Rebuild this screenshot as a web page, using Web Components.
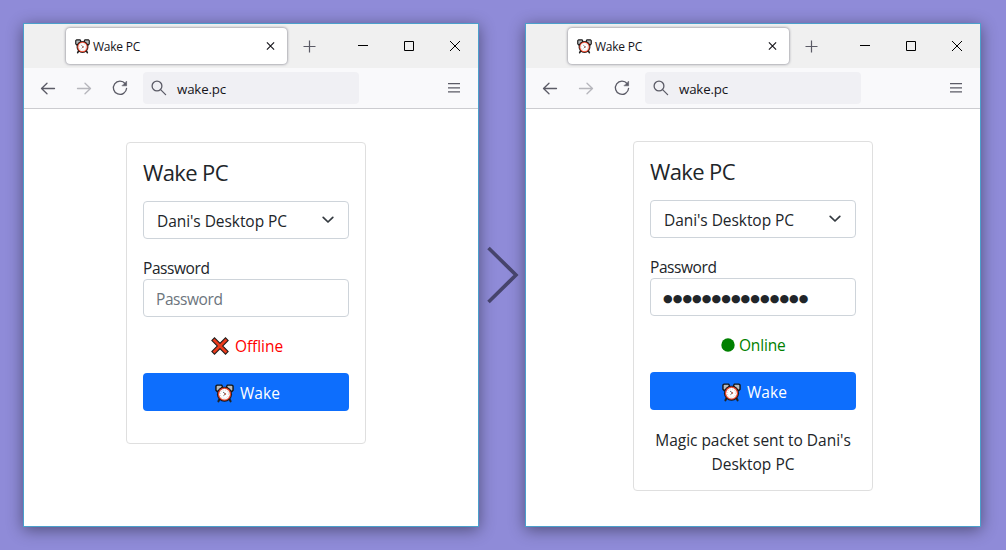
<!DOCTYPE html>
<html lang="en">
<head>
<meta charset="utf-8">
<title>Wake PC</title>
<style>
html,body{margin:0;height:100%}
body{background:#8f8bd8;font-family:"Open Sans","Noto Sans",sans-serif;color:#212529;overflow:hidden}
</style>
</head>
<body>
<wake-showcase></wake-showcase>
<script>
class Base extends HTMLElement{
  render(html){
    if(this.shadowRoot) return;
    this.attachShadow({mode:'open'}).innerHTML=html;
  }
}

/* Text spread evenly over a given advance width */
class FitText extends Base{
  connectedCallback(){
    this.render(`<style>:host{display:inline-block;white-space:pre;flex:none}span{display:inline-block}</style><span><slot></slot></span>`);
    const s=this.shadowRoot.querySelector('span'), w=+this.getAttribute('width');
    const n=this.textContent.length;
    const nat=s.getBoundingClientRect().width;
    if(w&&nat) s.style.letterSpacing=((w-nat)/n)+'px';
  }
}

class AlarmIcon extends Base{
  connectedCallback(){
    this.render(`<style>:host{display:block;flex:none;width:19px;height:19px}svg{display:block;width:100%;height:100%}</style>
<svg viewBox="0 0 20 20">
<path d="M5 15.5 3.6 18.2M15 15.5l1.4 2.7" stroke="#222" stroke-width="2.2" stroke-linecap="round"/>
<path d="M1 2.2 2 1.2h5l1 2-5.5 5L1 6.500zM19 2.200 18 1.200h-5l-1 2 5.500 5L19 6.500z" fill="#b9bcbf" stroke="#161616" stroke-width="1.500" stroke-linejoin="round"/>
<circle cx="10" cy="10.700" r="7.900" fill="#161616"/>
<circle cx="10" cy="10.700" r="6.900" fill="#e8442a"/>
<circle cx="10" cy="10.700" r="5.600" fill="#fff"/>
<circle cx="10" cy="10.700" r="4.400" fill="none" stroke="#aaa" stroke-width=".9" stroke-dasharray=".7 1.600"/>
<path d="M8.500 8.500 11 10.500 8.900 12.300" fill="none" stroke="#444" stroke-width=".9"/>
<circle cx="11" cy="10.500" r=".8" fill="#d8432c"/>
</svg>`);
  }
}

class TabStrip extends Base{
  connectedCallback(){
    this.render(`<style>
:host{display:flex;align-items:center;height:44px;background:#f0f0f0;padding-left:42px;box-sizing:border-box;color:#15141a}
.tab{display:flex;align-items:center;box-sizing:border-box;width:221px;height:36px;padding:0 12px 0 9px;border-radius:4px;background:#fff;box-shadow:0 0 3px rgba(40,40,60,.65);font-size:12px}
alarm-icon{width:15px;height:15px;margin-right:3px}
svg{display:block;flex:none}
.x{margin-left:auto}.plus{margin-left:16px}.ctl{margin-left:auto}
</style>
<div class="tab"><alarm-icon></alarm-icon><fit-text width="47">Wake PC</fit-text>
<svg class="x" width="9" height="10" viewBox="0 0 9 10"><path d="M.9 1.400l7.200 7.200M8.100 1.400.9 8.600" stroke="#15141a" stroke-width="1.150"/></svg></div>
<svg class="plus" width="13" height="13" viewBox="0 0 13 13"><path d="M6.500.5v12M.5 6.500h12" stroke="#5b5b66" stroke-width="1.200"/></svg>
<svg class="ctl" width="138" height="44" viewBox="0 0 138 44" fill="none" stroke="#000"><path d="M18 21.500h10"/><path d="M64.500 17.500h9v9h-9z"/><path d="M110 17l10 10M120 17l-10 10"/></svg>`);
  }
}

class AddressBar extends Base{
  connectedCallback(){
    this.render(`<style>
:host{display:flex;align-items:center;height:41px;box-sizing:border-box;background:#f9f9fb;border-bottom:1px solid #ccccd0;padding:0 18px 0 16px}
.nav{display:flex;gap:20px}
svg{display:block;flex:none;fill:none;stroke:#5b5b66;stroke-width:1.300;stroke-linecap:round;stroke-linejoin:round}
.dim{opacity:.42}
.field{display:flex;align-items:center;width:216px;height:32px;box-sizing:border-box;padding-left:8px;margin-left:15px;border-radius:4px;background:#f0f0f4;color:#15141a;font-size:13.300px}
.field fit-text{padding-top:2px}
.field svg{margin-right:10px}
.menu{margin-left:auto;stroke-linecap:butt}
</style>
<div class="nav">
<svg width="16" height="16" viewBox="0 0 16 16"><path d="M1.500 8.500h13M7 3.200 1.500 8.500 7 13.800"/></svg>
<svg class="dim" width="16" height="16" viewBox="0 0 16 16"><path d="M14.500 8.500h-13M9 3.200l5.500 5.300L9 13.800"/></svg>
<svg width="16" height="16" viewBox="0 0 16 16"><path d="M13.200 3.700A6.600 6.600 0 1 0 14.600 8.300"/><path d="M14.600 1.500v4.300h-4.300z" fill="#5b5b66" stroke-width=".6"/></svg>
</div>
<div class="field"><svg width="16" height="16" viewBox="0 0 16 16"><circle cx="6" cy="6" r="4.900"/><path d="M9.600 9.600l5 5"/></svg><fit-text width="49">wake.pc</fit-text></div>
<svg class="menu" width="12" height="12" viewBox="0 0 12 12"><path d="M0 1.700h12M0 5.800h12M0 9.900h12"/></svg>`);
  }
}

class BrowserWindow extends Base{
  connectedCallback(){
    this.render(`<style>
:host{display:flex;flex-direction:column;box-sizing:border-box;width:456px;height:504px;flex:none;background:#fff;border:1px solid #4b9fcb;box-shadow:0 3px 15px rgba(0,0,0,.43)}
main{flex:1;display:block}
</style><tab-strip></tab-strip><address-bar></address-bar><main><slot></slot></main>`);
  }
}

class WakeCard extends Base{
  connectedCallback(){
    const on=this.getAttribute('state')==='online';
    this.render(`<style>
:host{display:flex;flex-direction:column;box-sizing:border-box;width:240px;border:1px solid #dfdfdf;border-radius:4px;padding:16px;font-size:15.500px;line-height:24px}
:host([state=offline]){height:302px;margin:33px 0 0 102px}
:host([state=online]){height:350px;margin:32px 0 0 107px}
.title{font-size:22px;line-height:26px;height:42px;flex:none}
.box{display:flex;align-items:center;box-sizing:border-box;height:38px;flex:none;border:1px solid #ced4da;border-radius:4px;padding:2px 14px 0 12px}
.select{padding:0 14px 0 13px}
.select fit-text{padding-top:2px}
.select svg{margin-left:auto;margin-bottom:1px}
.label{margin-top:17px;height:23px;flex:none}
.ph{color:#6c757d}
.dots{font:11px/24px "DejaVu Sans",sans-serif;padding-top:2px}
.status{display:flex;align-items:center;height:24px;margin-top:17px;flex:none;color:red;padding-left:68px}
:host([state=online]) .status{color:green;padding-left:71px}
.status svg{flex:none}
.btn{display:flex;align-items:center;height:38px;flex:none;margin-top:15px;border-radius:4px;background:#0d6efd;color:#fff;padding-left:72px}
.btn alarm-icon{margin-right:6px;position:relative;top:1px}
.btn fit-text{padding-top:2px}
.msg{margin-top:18px;text-align:center}
.msg fit-text{display:block}
</style>
<div class="title"><fit-text width="85">Wake PC</fit-text></div>
<div class="box select"><fit-text width="130">Dani's Desktop PC</fit-text>
<svg width="12" height="8" viewBox="0 0 12 8"><path d="M1.200 1.300 6 6l4.800-4.700" fill="none" stroke="#343a40" stroke-width="1.700" stroke-linecap="round" stroke-linejoin="round"/></svg></div>
<div class="label"><fit-text width="66.500">Password</fit-text></div>
<div class="box">${on?'<fit-text class="dots" width="145.500">●●●●●●●●●●●●●●●</fit-text>':'<fit-text class="ph" width="66.500">Password</fit-text>'}</div>
<div class="status">${on
?'<svg width="14" height="14" viewBox="0 0 14 14" style="margin-right:4px"><circle cx="7" cy="7" r="6.700" fill="green"/></svg><fit-text width="46.500">Online</fit-text>'
:'<svg width="18" height="18" viewBox="0 0 18 18" style="margin-right:6px"><path d="M3.500 3.500l11 11M14.500 3.500l-11 11" stroke="#1a1a1a" stroke-width="4.800" stroke-linecap="square"/><path d="M3.500 3.500l11 11M14.500 3.500l-11 11" stroke="#ea3b1c" stroke-width="2.800" stroke-linecap="square"/></svg><fit-text width="48">Offline</fit-text>'}</div>
<div class="btn"><alarm-icon></alarm-icon><fit-text width="40">Wake</fit-text></div>
${on?'<div class="msg"><fit-text width="195.500">Magic packet sent to Dani\'s</fit-text><fit-text width="83">Desktop PC</fit-text></div>':''}`);
  }
}

class WakeShowcase extends Base{
  connectedCallback(){
    this.render(`<style>
:host{display:flex;align-items:flex-start;box-sizing:border-box;width:1006px;height:550px;padding:23px 0 0 23px}
.arrow{width:46px;height:504px;display:flex;align-items:center;justify-content:center;flex:none;position:relative;z-index:1}
</style>
<browser-window><wake-card state="offline"></wake-card></browser-window>
<div class="arrow"><svg width="34" height="60" viewBox="0 0 34 60"><path d="M3.500 3 31 30 3.500 57" fill="none" stroke="#46446c" stroke-width="3.600"/></svg></div>
<browser-window><wake-card state="online"></wake-card></browser-window>`);
  }
}

customElements.define('fit-text',FitText);
customElements.define('alarm-icon',AlarmIcon);
customElements.define('tab-strip',TabStrip);
customElements.define('address-bar',AddressBar);
customElements.define('browser-window',BrowserWindow);
customElements.define('wake-card',WakeCard);
customElements.define('wake-showcase',WakeShowcase);
</script>
</body>
</html>
